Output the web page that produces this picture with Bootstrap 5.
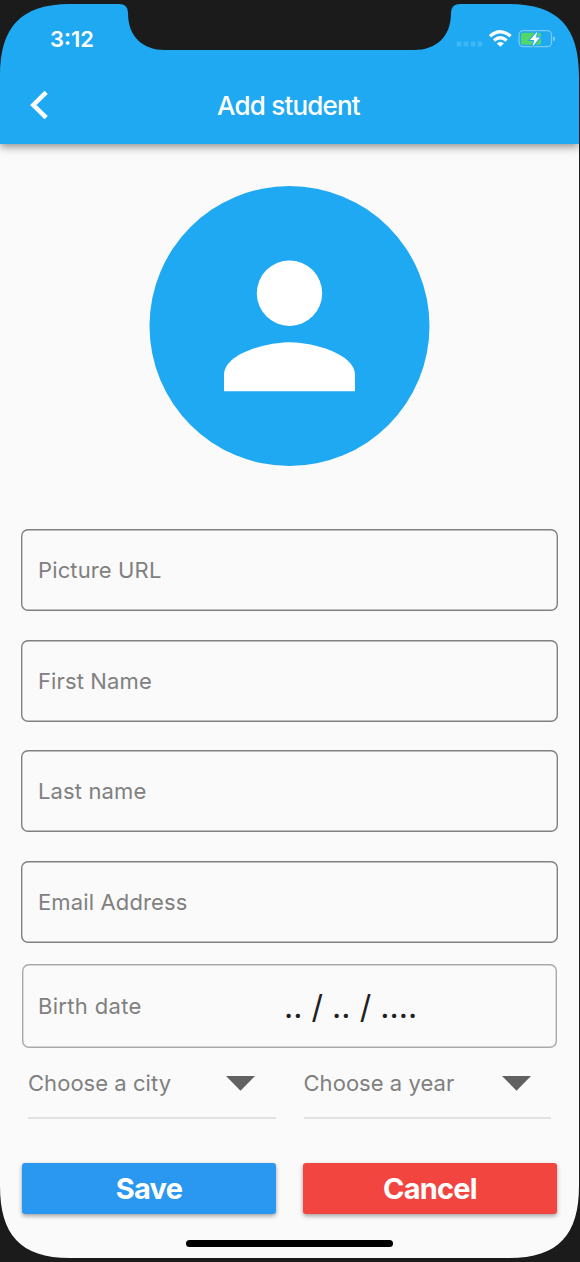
<!DOCTYPE html>
<html lang="en">
<head>
<meta charset="utf-8">
<meta name="viewport" content="width=device-width, initial-scale=1">
<title>Add student</title>
<link rel="stylesheet" href="https://cdn.jsdelivr.net/npm/bootstrap@5.3.0/dist/css/bootstrap.min.css">
<style>
  body { background: #1b1b1b; font-family: Inter, "Liberation Sans", sans-serif; overflow: hidden; }
  .phone { width: 580px; height: 1262px; padding: 4px 1px 4px 0; }
  .screen { background: #fafafa; }
  .top-area { height: 140px; background: #1fa9f2; color: #fff; box-shadow: 0 3px 8px rgba(0,0,0,.42); z-index: 1; }
  .status { height: 70px; padding: 0 24px 0 50px; }
  .clock { font-size: 22px; font-weight: 600; letter-spacing: 0; line-height: 1; }
  .status svg { margin-top: -3px; }
  .app-bar { height: 62px; }
  .app-bar h1 { font-size: 26px; font-weight: 500; letter-spacing: -.8px; line-height: 1; padding: 1px 2px 0 0; }
  .back { left: 30px; top: 17px; }
  .avatar { height: 280px; margin: 42px 0 63px; }
  .fields { gap: 28.5px; padding: 0 21px; }
  .field { height: 82px; padding-left: 17px; border-radius: 7px; box-shadow: inset 0 0 0 1.4px #808080; }
  .hint { font-size: 22px; letter-spacing: .13px; color: #808080; line-height: 1; }
  .birth { height: 84px; margin: 21.5px 22px 0; padding-left: 16px; border-radius: 7px; box-shadow: inset 0 0 0 1.4px #a9a9a9; }
  .birth .hint { letter-spacing: .32px; }
  .date-value { font-size: 32px; font-weight: 400; color: #202020; line-height: 1; left: 262px; top: 27px; letter-spacing: .03px; white-space: pre; }
  .pickers { padding: 0 28px; gap: 28px; }
  .picker { height: 71px; border-bottom: 2px solid #e2e2e2; padding: 1px 20.5px 0 0; }
  .picker .hint { letter-spacing: .04px; }
  .buttons { padding: 0 22px; gap: 27px; margin-top: 44px; }
  .action { height: 51px; border: 0; border-radius: 3px; color: #fff; font-size: 29px; font-weight: 700; letter-spacing: -.78px; line-height: 1; box-shadow: 0 2px 4px rgba(0,0,0,.36); }
  .save { background: #2a97f0; }
  .cancel { background: #f3453f; }
  .home-bar { width: 207px; height: 7px; background: #000; margin: 26px auto 0; }
  .bezel { z-index: 2; pointer-events: none; }
</style>
</head>
<body>
<div class="phone position-relative">
  <main class="screen h-100 d-flex flex-column">
    <header class="top-area position-relative flex-shrink-0">
      <div class="status d-flex align-items-center justify-content-between">
        <span class="clock">3:12</span>
        <svg width="100" height="24" viewBox="455 26 100 24">
          <g fill="#3fb6f5"><rect x="456.5" y="41.5" width="5" height="5" rx="1.6"/><rect x="463.5" y="41.5" width="5" height="5" rx="1.6"/><rect x="470.5" y="41.5" width="5" height="5" rx="1.6"/><rect x="477.5" y="41.5" width="5" height="5" rx="1.6"/></g>
          <g fill="none" stroke="#fff" stroke-width="3.3"><path d="M490 36.2Q500.3 27.2 510.6 36.2"/><path d="M494 40.4Q500.3 35 506.6 40.4"/></g>
          <path d="M496.8 43.4Q500.3 40.8 503.8 43.4L500.3 46.8Z" fill="#fff"/>
          <rect x="519" y="30.7" width="32.5" height="16" rx="4.2" fill="none" stroke="#79cbf7" stroke-width="1.2"/>
          <path d="M553 36.2Q555.2 37 555.2 38.8T553 41.4Z" fill="#79cbf7"/>
          <rect x="521" y="32.7" width="20" height="12" rx="2" fill="#53d769"/>
          <path d="M537.4 31.4L529.9 39.9H534.2L532.6 46.4L540 37.6H535.8Z" fill="#fff" stroke="#1fa9f2" stroke-width="2" paint-order="stroke"/>
        </svg>
      </div>
      <div class="app-bar position-relative d-flex align-items-center justify-content-center">
        <svg class="back position-absolute" width="20" height="28" viewBox="0 0 20 28"><path d="M16.2 1.3L3.3 14L16.2 26.7" fill="none" stroke="#fff" stroke-width="4.5"/></svg>
        <h1 class="m-0">Add student</h1>
      </div>
    </header>

    <div class="avatar flex-shrink-0">
      <svg class="d-block" width="579" height="280" viewBox="0 186 579 280" fill="#fff"><circle cx="289.5" cy="326" r="140" fill="#1fa9f2"/><circle cx="289.5" cy="293.2" r="32.7"/><path d="M224 391.3V375C224 353.5 267 342.3 289.5 342.3S355 353.5 355 375V391.3Z"/></svg>
    </div>

    <div class="fields d-flex flex-column">
      <label class="field d-flex align-items-center"><span class="hint">Picture URL</span></label>
      <label class="field d-flex align-items-center"><span class="hint">First Name</span></label>
      <label class="field d-flex align-items-center"><span class="hint">Last name</span></label>
      <label class="field d-flex align-items-center"><span class="hint">Email Address</span></label>
    </div>
    <div class="birth position-relative d-flex align-items-center flex-shrink-0">
      <span class="hint">Birth date</span>
      <span class="date-value position-absolute">.. / .. / ....</span>
    </div>

    <div class="pickers d-flex">
      <div class="picker flex-fill w-50 d-flex align-items-center justify-content-between"><span class="hint">Choose a city</span><svg width="29" height="15" viewBox="0 0 29 15"><path d="M0 0H29L14.5 14.7Z" fill="#616161"/></svg></div>
      <div class="picker flex-fill w-50 d-flex align-items-center justify-content-between"><span class="hint">Choose a year</span><svg width="29" height="15" viewBox="0 0 29 15"><path d="M0 0H29L14.5 14.7Z" fill="#616161"/></svg></div>
    </div>

    <div class="buttons d-flex">
      <button class="action save btn flex-fill w-50 p-0" type="button">Save</button>
      <button class="action cancel btn flex-fill w-50 p-0" type="button">Cancel</button>
    </div>
    <div class="home-bar rounded-pill flex-shrink-0"></div>
  </main>

  <!-- device frame: rounded screen corners and the notch -->
  <svg class="bezel position-absolute top-0 start-0" width="580" height="1262" viewBox="0 0 580 1262" fill="#1b1b1b">
    <path fill-rule="evenodd" d="M0 0H580V1262H0ZM0 76C0 28 20 4 70 4H119Q128 4 128 13C128 37 143 50 165 50H414C436 50 451 37 451 13Q451 4 460 4H509C559 4 579 28 579 76V1186C579 1234 559 1258 509 1258H70C20 1258 0 1234 0 1186Z"/>
  </svg>
</div>
<script src="https://cdn.jsdelivr.net/npm/bootstrap@5.3.0/dist/js/bootstrap.bundle.min.js"></script>
</body>
</html>
